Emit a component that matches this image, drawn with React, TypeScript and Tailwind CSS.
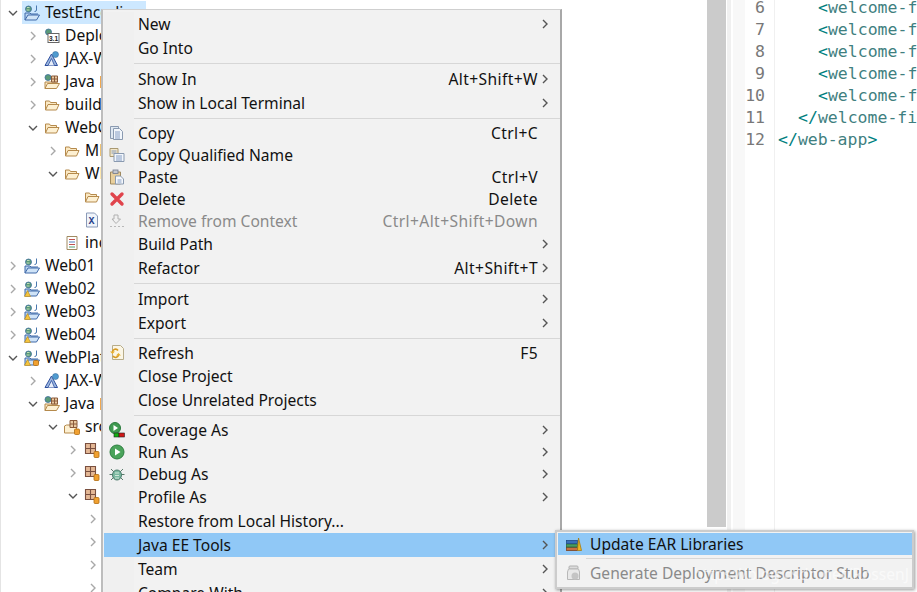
import type { ReactNode } from 'react';

const UI_FONT = "font-['Noto_Sans',sans-serif]";

function Chevron({ open = false, className = '' }: { open?: boolean; className?: string }) {
  return (
    <svg width="12" height="12" viewBox="0 0 12 12" className={className} fill="none" stroke="currentColor" strokeWidth="1.4">
      {open ? <path d="M2 4l4 4 4-4" /> : <path d="M4 2l4 4-4 4" />}
    </svg>
  );
}

function Icon({ children, className = '' }: { children: ReactNode; className?: string }) {
  return (
    <svg width="16" height="16" viewBox="0 0 16 16" className={`shrink-0 ${className}`}>
      {children}
    </svg>
  );
}

function Folder() {
  return (
    <Icon>
      <path d="M1.5 13V4h4l1 1.5h6V8" fill="#fbe9c4" stroke="#b58a4c" />
      <path d="M1.5 13l2.5-5.5h11L12.5 13z" fill="#fdf0d2" stroke="#b58a4c" />
    </Icon>
  );
}

function Project({ warn, jar }: { warn?: boolean; jar?: boolean }) {
  return (
    <Icon>
      <circle cx="4.5" cy="4" r="3" fill="#5a9a78" stroke="#3d6f9e" strokeWidth="0.8" />
      <path d="M3 2.5h2.5M2.5 5h3" stroke="#d8ecc8" strokeWidth="0.8" />
      <path d="M12.5 0.5v4.5q0 1.5-2 1.5" fill="none" stroke="#4a78b0" strokeWidth="1" />
      <path d="M1 15V8h5l1 1h7" fill="#b8d4f0" stroke="#3f68a8" />
      <path d="M1 15l3-5h11.5l-3 5z" fill="#cfe3f7" stroke="#3f68a8" />
      {warn && <path d="M3.5 9.5l3 6h-6z" fill="#f5c43c" stroke="#b88a1c" strokeWidth="0.6" />}
      {jar && <rect x="9.5" y="10.5" width="5" height="5" rx="1" fill="#f0a030" stroke="#b06c10" strokeWidth="0.8" />}
    </Icon>
  );
}

function Deployment() {
  return (
    <Icon>
      <circle cx="4.5" cy="4" r="3" fill="#5a9a78" stroke="#3d6f9e" strokeWidth="0.8" />
      <rect x="4" y="5.5" width="11" height="9" fill="#fff" stroke="#666" />
      <text x="5" y="12.5" fontSize="6.5" fontFamily="Liberation Sans" fontWeight="700" fill="#222">3.1</text>
    </Icon>
  );
}

function Jax() {
  return (
    <Icon>
      <path d="M1 14.5L7.5 3l6 11.5z" fill="#9cb8e0" stroke="#2f4f9e" />
      <path d="M4 14.5l3.5-7 3 7" fill="#e8eef8" stroke="#2f4f9e" strokeWidth="0.8" />
      <circle cx="11.5" cy="3.5" r="3" fill="#4f9bd0" stroke="#3d6f9e" strokeWidth="0.6" />
    </Icon>
  );
}

function JavaResources() {
  return (
    <Icon>
      <circle cx="4" cy="3.5" r="3" fill="#5a9a78" stroke="#3d6f9e" strokeWidth="0.8" />
      <path d="M1 14.5V8h13" fill="#fbe9c4" stroke="#b58a4c" />
      <path d="M1 14.5l2.5-5h12l-3 5z" fill="#fdf0d2" stroke="#b58a4c" />
      <path d="M7.5 2h6v6h-6zM10.5 2v6M7.5 5h6" fill="#e9c9a0" stroke="#8a5a3a" />
    </Icon>
  );
}

function SrcFolder() {
  return (
    <Icon>
      <path d="M0.5 14V7l2-1h10v8z" fill="#fdf0d2" stroke="#b58a4c" />
      <path d="M6 1.5h7v7H6zM9.5 1.5v7M6 5h7" fill="#e9c9a0" stroke="#8a5a3a" />
      <rect x="10.5" y="10" width="5" height="5.5" rx="1" fill="#f0a030" stroke="#b06c10" strokeWidth="0.8" />
    </Icon>
  );
}

function PackageIcon() {
  return (
    <Icon>
      <path d="M1.5 1.5h10v10h-10zM6.5 1.5v10M1.5 6.5h10" fill="#e4b896" stroke="#7a5040" strokeWidth="1.1" />
      <rect x="10" y="9.5" width="5" height="6" rx="1" fill="#f0a030" stroke="#b06c10" strokeWidth="0.8" />
    </Icon>
  );
}

function XmlFile() {
  return (
    <Icon>
      <path d="M2.5 1h8l3 3v11h-11z" fill="#f0f4fa" stroke="#8a9ab8" />
      <text x="4.5" y="12" fontSize="10" fontFamily="Liberation Mono" fontWeight="700" fill="#2a3f8a">X</text>
    </Icon>
  );
}

function HtmlFile() {
  return (
    <Icon>
      <path d="M3 1.5h10v13H3z" fill="#fff" stroke="#a08a60" />
      <path d="M5 4.5h6" stroke="#c05050" />
      <path d="M5 7h6" stroke="#5080c0" />
      <path d="M5 9.5h6" stroke="#c05050" />
      <path d="M5 12h6" stroke="#50a070" />
    </Icon>
  );
}

const tree: { level: number; label?: string; icon?: ReactNode; arrow?: 'open' | 'closed'; mark?: boolean; selected?: boolean }[] = [
  { level: 0, label: 'TestEncoding', icon: <Project />, arrow: 'open', selected: true },
  { level: 1, label: 'Deployment', icon: <Deployment />, arrow: 'closed' },
  { level: 1, label: 'JAX-WS', icon: <Jax />, arrow: 'closed' },
  { level: 1, label: 'Java', icon: <JavaResources />, arrow: 'closed', mark: true },
  { level: 1, label: 'build', icon: <Folder />, arrow: 'closed' },
  { level: 1, label: 'WebContent', icon: <Folder />, arrow: 'open' },
  { level: 2, label: 'META-INF', icon: <Folder />, arrow: 'closed' },
  { level: 2, label: 'WEB-INF', icon: <Folder />, arrow: 'open' },
  { level: 3, icon: <Folder /> },
  { level: 3, icon: <XmlFile /> },
  { level: 2, label: 'index', icon: <HtmlFile /> },
  { level: 0, label: 'Web01', icon: <Project />, arrow: 'closed' },
  { level: 0, label: 'Web02', icon: <Project warn />, arrow: 'closed' },
  { level: 0, label: 'Web03', icon: <Project warn />, arrow: 'closed' },
  { level: 0, label: 'Web04', icon: <Project warn />, arrow: 'closed' },
  { level: 0, label: 'WebPlatform', icon: <Project warn jar />, arrow: 'open' },
  { level: 1, label: 'JAX-WS', icon: <Jax />, arrow: 'closed' },
  { level: 1, label: 'Java', icon: <JavaResources />, arrow: 'open', mark: true },
  { level: 2, label: 'src', icon: <SrcFolder />, arrow: 'open' },
  { level: 3, icon: <PackageIcon />, arrow: 'closed' },
  { level: 3, icon: <PackageIcon />, arrow: 'closed' },
  { level: 3, icon: <PackageIcon />, arrow: 'open' },
  { level: 4, arrow: 'closed' },
  { level: 4, arrow: 'closed' },
  { level: 4, arrow: 'closed' },
  { level: 4, arrow: 'closed' },
];

const indent = ['pl-[5px]', 'pl-[25px]', 'pl-[45px]', 'pl-[65px]', 'pl-[85px]'];

function ProjectTree() {
  return (
    <div className={`w-[707px] shrink-0 border-l border-[#e4e4e4] pt-px text-[15.6px] text-[#111] ${UI_FONT}`}>
      {tree.map((row, i) => (
        <div key={i} className={`flex h-[23px] items-center ${indent[row.level]}`}>
          <span className={`flex w-[13px] shrink-0 justify-center ${row.arrow === 'open' ? 'text-[#555]' : 'text-[#a8a8a8]'}`}>
            {row.arrow && <Chevron open={row.arrow === 'open'} />}
          </span>
          <span className={`ml-[3px] flex h-[23px] items-center gap-[5px] pl-[2px] ${row.selected ? 'w-[124px] bg-[#cde8ff]' : ''}`}>
            {row.icon}
            {row.label && <span className="whitespace-nowrap">{row.label}</span>}
            {row.mark && <span className="h-[12px] w-[2px] bg-[#f0a850]" />}
          </span>
        </div>
      ))}
    </div>
  );
}

const code: [string, ReactNode][] = [
  ['6', <span className="pl-[40px]"><b className="font-normal text-[#008080]">&lt;</b>welcome-f</span>],
  ['7', <span className="pl-[40px]"><b className="font-normal text-[#008080]">&lt;</b>welcome-f</span>],
  ['8', <span className="pl-[40px]"><b className="font-normal text-[#008080]">&lt;</b>welcome-f</span>],
  ['9', <span className="pl-[40px]"><b className="font-normal text-[#008080]">&lt;</b>welcome-f</span>],
  ['10', <span className="pl-[40px]"><b className="font-normal text-[#008080]">&lt;</b>welcome-f</span>],
  ['11', <span className="pl-[20px]"><b className="font-normal text-[#008080]">&lt;/</b>welcome-fi</span>],
  ['12', <span><b className="font-normal text-[#008080]">&lt;/</b>web-app<b className="font-normal text-[#008080]">&gt;</b></span>],
];

function Editor() {
  return (
    <div className="flex min-w-0 flex-1">
      <div className="flex w-[20px] shrink-0 flex-col">
        <div className="h-[527px] w-[19px] bg-[#cbcbcb]" />
      </div>
      <div className="w-[4px] shrink-0 bg-[#f0f0f0]" />
      <div className="w-[2px] shrink-0" />
      <div className="w-[12px] shrink-0 bg-[#f8f8f8]" />
      <div className="min-w-0 flex-1 -mt-[3px] font-['DejaVu_Sans_Mono',monospace] text-[16.5px] leading-[22px]">
        {code.map(([n, text]) => (
          <div key={n} className="flex h-[22px]">
            <span className="w-[30px] shrink-0 whitespace-nowrap border-r border-[#f0f0f0] pr-[9px] text-right text-[#787878]">{n}</span>
            <span className="whitespace-nowrap pl-[3px] text-[#3f7f7f]">{text}</span>
          </div>
        ))}
        <div className="ml-[29px] h-[500px] border-l border-[#f0f0f0]" />
      </div>
    </div>
  );
}

function CopyIcon() {
  return (
    <Icon>
      <path d="M1.5 1.5h8v12h-8z" fill="#dfe8f2" stroke="#8a9ab0" />
      <path d="M4.5 3.5h6l3 3v8h-9z" fill="#f2f6fb" stroke="#8a9ab0" />
      <path d="M6 7h5M6 9h5M6 11h5M6 13h5" stroke="#6a88b8" strokeWidth="0.8" />
    </Icon>
  );
}

function CopyQualifiedIcon() {
  return (
    <Icon>
      <path d="M1 1.5h8v8H1z" fill="#f3e6c8" stroke="#a89870" />
      <path d="M2.5 4h5M2.5 6h5" stroke="#6a88b8" strokeWidth="0.8" />
      <path d="M5 6.5h10v8H5z" fill="#f2f6fb" stroke="#8a9ab0" />
      <path d="M7 9h6M7 11h6M7 13h6" stroke="#6a88b8" strokeWidth="0.8" />
    </Icon>
  );
}

function PasteIcon() {
  return (
    <Icon>
      <path d="M1.5 3h10v12h-10z" fill="#e8cf9c" stroke="#a08a60" />
      <rect x="4" y="1" width="5" height="3.5" fill="#c4c8d0" stroke="#70788a" strokeWidth="0.8" />
      <path d="M6.5 7h5l3 3v5h-8z" fill="#f6f8fc" stroke="#8a9ab0" />
      <path d="M8.5 11h4M8.5 13h4" stroke="#6a88b8" strokeWidth="0.8" />
    </Icon>
  );
}

function DeleteIcon() {
  return (
    <Icon>
      <path d="M3 3l10 10M13 3L3 13" stroke="#e0444c" strokeWidth="3.4" strokeLinecap="round" />
    </Icon>
  );
}

function RemoveIcon() {
  return (
    <Icon>
      <path d="M5 2h4v4h2.5L7 10.5 3 6h2z" fill="#f0f0f0" stroke="#b0b0b0" />
      <path d="M1 13.5h2M5 13.5h2M9 13.5h2M13 13.5h2" stroke="#b8b8b8" />
    </Icon>
  );
}

function RefreshIcon() {
  return (
    <Icon>
      <path d="M3.5 0.5h8l3 3v11h-11z" fill="#fbf6e6" stroke="#b8ac88" />
      <path d="M9 5.5A3 3 0 0 0 3.5 7M4 11a3 3 0 0 0 5.5-1" fill="none" stroke="#d89a20" strokeWidth="1.6" />
      <path d="M1 6.5h5L3.5 9zM7 10.5h5L9.5 8z" fill="#e8b030" />
    </Icon>
  );
}

function CoverageIcon() {
  return (
    <Icon>
      <circle cx="6" cy="6" r="5.5" fill="#3f9a50" stroke="#2a7a3c" />
      <path d="M4.5 3l4.5 3-4.5 3z" fill="#fff" />
      <rect x="5" y="11" width="5" height="4" fill="#12b012" stroke="#222" strokeWidth="0.6" />
      <rect x="10" y="11" width="5.5" height="4" fill="#d01818" stroke="#222" strokeWidth="0.6" />
    </Icon>
  );
}

function RunIcon() {
  return (
    <Icon>
      <circle cx="8" cy="8" r="7" fill="#4aa35a" stroke="#2e7f40" />
      <path d="M6 4.5l5.5 3.5L6 11.5z" fill="#fff" />
    </Icon>
  );
}

function DebugIcon() {
  return (
    <Icon>
      <path d="M2 3l3 3M14 3l-3 3M0.5 8.5h3M15.5 8.5h-3M2 14l3-3M14 14l-3-3" stroke="#5a7a6a" strokeWidth="1" />
      <ellipse cx="8" cy="9" rx="4.5" ry="5" fill="#7ab8a0" stroke="#4a7a6a" />
      <path d="M6 7h4M6 9.5h4M6 12h4" stroke="#cfe8d8" />
    </Icon>
  );
}

function BooksIcon() {
  return (
    <Icon>
      <rect x="0.5" y="11.5" width="11" height="3" fill="#c87040" stroke="#7a4020" strokeWidth="0.8" />
      <rect x="0.5" y="8" width="11" height="3" fill="#4a9a60" stroke="#2a6a3a" strokeWidth="0.8" />
      <rect x="0.5" y="4.5" width="11" height="3" fill="#3a70b8" stroke="#1e4a88" strokeWidth="0.8" />
      <path d="M12.5 2l3 12.5h-4z" fill="#f0b820" stroke="#a87a10" strokeWidth="0.8" />
    </Icon>
  );
}

function GenerateIcon() {
  return (
    <Icon>
      <rect x="3" y="1" width="9" height="3" rx="1" fill="#dcdcdc" stroke="#b0b0b0" />
      <path d="M2.5 4h10l1 3v7.5h-12V7z" fill="#e8e8e8" stroke="#b8b8b8" />
      <circle cx="9" cy="11" r="3.5" fill="#c4c4c4" />
    </Icon>
  );
}

type MenuRow =
  | 'sep'
  | { label: string; h: number; icon?: ReactNode; shortcut?: string; arrow?: boolean; disabled?: boolean; active?: boolean };

const menu: MenuRow[] = [
  { label: 'New', h: 24, arrow: true },
  { label: 'Go Into', h: 24 },
  'sep',
  { label: 'Show In', h: 24, shortcut: 'Alt+Shift+W', arrow: true },
  { label: 'Show in Local Terminal', h: 24, arrow: true },
  'sep',
  { label: 'Copy', h: 22, icon: <CopyIcon />, shortcut: 'Ctrl+C' },
  { label: 'Copy Qualified Name', h: 22, icon: <CopyQualifiedIcon /> },
  { label: 'Paste', h: 22, icon: <PasteIcon />, shortcut: 'Ctrl+V' },
  { label: 'Delete', h: 22, icon: <DeleteIcon />, shortcut: 'Delete' },
  { label: 'Remove from Context', h: 22, icon: <RemoveIcon />, shortcut: 'Ctrl+Alt+Shift+Down', disabled: true },
  { label: 'Build Path', h: 24, arrow: true },
  { label: 'Refactor', h: 24, shortcut: 'Alt+Shift+T', arrow: true },
  'sep',
  { label: 'Import', h: 24, arrow: true },
  { label: 'Export', h: 24, arrow: true },
  'sep',
  { label: 'Refresh', h: 22, icon: <RefreshIcon />, shortcut: 'F5' },
  { label: 'Close Project', h: 24 },
  { label: 'Close Unrelated Projects', h: 24 },
  'sep',
  { label: 'Coverage As', h: 22, icon: <CoverageIcon />, arrow: true },
  { label: 'Run As', h: 22, icon: <RunIcon />, arrow: true },
  { label: 'Debug As', h: 22, icon: <DebugIcon />, arrow: true },
  { label: 'Profile As', h: 24, arrow: true },
  { label: 'Restore from Local History...', h: 24 },
  { label: 'Java EE Tools', h: 24, arrow: true, active: true },
  { label: 'Team', h: 24, arrow: true },
  { label: 'Compare With', h: 24, arrow: true },
];

function ContextMenu() {
  return (
    <div className={`absolute left-[101px] top-[9px] w-[461px] border border-[#cfcfcf] border-l-2 border-r-2 border-l-[#bdbdbd] border-r-[#a8a8a8] bg-[#f2f2f2] pl-px pt-[2px] text-[15.6px] text-[#111] ${UI_FONT}`}>
      {menu.map((row, i) => {
        if (row === 'sep') {
          return (
            <div key={i} className="flex h-[7px]">
              <div className="w-[30px] bg-[#f0f0f0]" />
              <div className="mt-[3px] h-px flex-1 bg-[#d7d7d7]" />
            </div>
          );
        }
        return (
          <div
            key={row.label}
            style={{ height: row.h }}
            className={`flex items-center ${row.active ? 'bg-[#90c8f6]' : ''} ${row.disabled ? 'text-[#8a8a8a]' : ''}`}
          >
            <span className={`flex h-full w-[30px] shrink-0 items-center justify-center pr-[4px] ${row.active ? '' : 'bg-[#f0f0f0]'}`}>{row.icon}</span>
            <span className="flex-1 whitespace-nowrap pl-[4px] pt-[2px]">{row.label}</span>
            {row.shortcut && <span className="whitespace-nowrap pt-[2px] tracking-[0.4px]">{row.shortcut}</span>}
            <span className="flex w-[22px] shrink-0 justify-center pr-[9px] text-[#555]">
              {row.arrow && <Chevron />}
            </span>
          </div>
        );
      })}
    </div>
  );
}

function SubMenu() {
  return (
    <div className={`absolute left-[555px] top-[530px] w-[359px] border-2 border-[#cccccc] bg-[#f2f2f2] pl-px pt-px text-[15.6px] shadow-[1px_1px_3px_rgba(0,0,0,0.4)] ${UI_FONT}`}>
      <div className="flex h-[22px] items-center bg-[#90c8f6] text-[#111]">
        <span className="flex w-[28px] shrink-0 justify-center pl-[3px]"><BooksIcon /></span>
        <span className="pl-[4px] pt-[2px]">Update EAR Libraries</span>
      </div>
      <div className="ml-[28px] mt-[3px] h-px bg-[#d7d7d7]" />
      <div className="relative flex h-[28px] items-center text-[#8a8a8a]">
        <span className="flex w-[28px] shrink-0 justify-center pl-[3px]"><GenerateIcon /></span>
        <span className="whitespace-nowrap pl-[4px] pt-[2px]">Generate Deployment Descriptor Stub</span>
        <span className="absolute right-[3px] top-[4px] whitespace-nowrap text-white/60">https://blog.csdn.net/RossenJ</span>
      </div>
    </div>
  );
}

export default function App() {
  return (
    <div className="relative flex h-[592px] w-[917px] overflow-hidden bg-white">
      <ProjectTree />
      <Editor />
      <ContextMenu />
      <SubMenu />
    </div>
  );
}
